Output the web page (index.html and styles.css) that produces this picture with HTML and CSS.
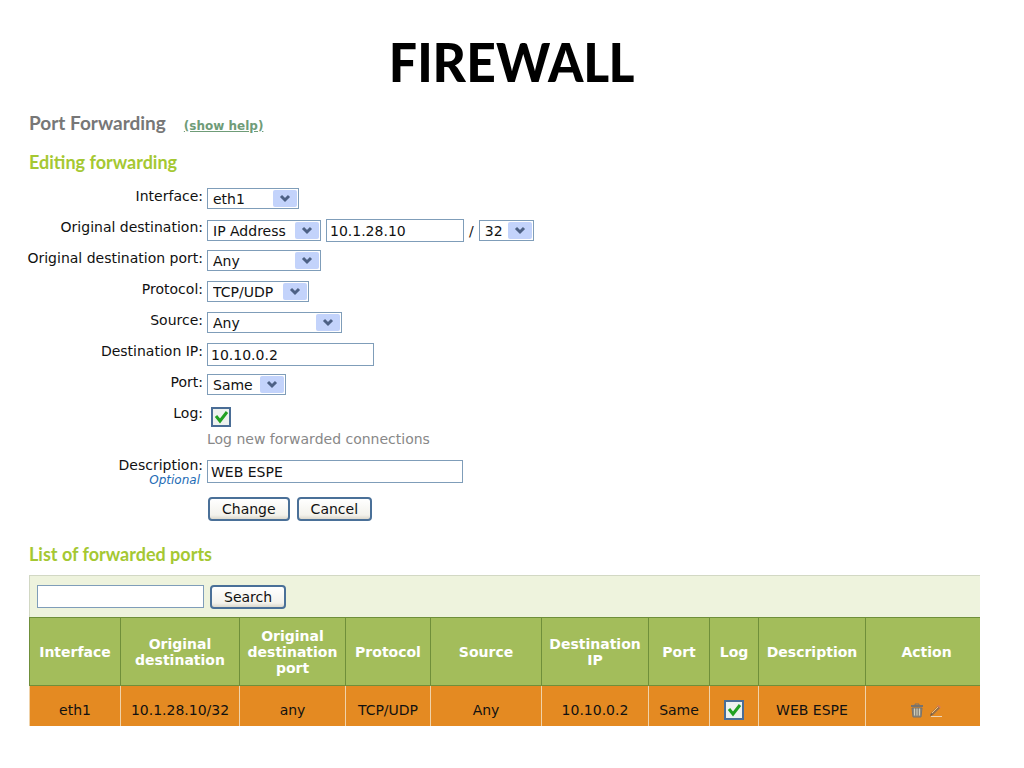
FILE: index.html
```html
<!DOCTYPE html>
<html lang="en">
<head>
  <meta charset="UTF-8">
  <meta name="viewport" content="width=device-width, initial-scale=1.0">
  <title>Firewall - Port Forwarding</title>
  <link rel="stylesheet" href="styles.css">
</head>
<body>

<h1>FIREWALL</h1>

<main>
  <header class="page-header">
    <h2>Port Forwarding</h2>
    <a class="help" href="#help">(show help)</a>
  </header>

  <h3>Editing forwarding</h3>

  <form class="edit-form">
    <div class="row">
      <label for="interface">Interface:</label>
      <div class="field">
        <select id="interface" class="w-interface"><option>eth1</option></select>
      </div>
    </div>
    <div class="row">
      <label for="orig-type">Original destination:</label>
      <div class="field">
        <select id="orig-type" class="w-type"><option>IP Address</option></select>
        <input type="text" class="w-address" value="10.1.28.10" aria-label="Original address">
        <span>/</span>
        <select class="w-mask" aria-label="Mask"><option>32</option></select>
      </div>
    </div>
    <div class="row">
      <label for="orig-port">Original destination port:</label>
      <div class="field">
        <select id="orig-port" class="w-type"><option>Any</option></select>
      </div>
    </div>
    <div class="row">
      <label for="protocol">Protocol:</label>
      <div class="field">
        <select id="protocol" class="w-protocol"><option>TCP/UDP</option></select>
      </div>
    </div>
    <div class="row">
      <label for="source">Source:</label>
      <div class="field">
        <select id="source" class="w-source"><option>Any</option></select>
      </div>
    </div>
    <div class="row">
      <label for="dest-ip">Destination IP:</label>
      <div class="field">
        <input type="text" id="dest-ip" class="w-text" value="10.10.0.2">
      </div>
    </div>
    <div class="row">
      <label for="port">Port:</label>
      <div class="field">
        <select id="port" class="w-port"><option>Same</option></select>
      </div>
    </div>
    <div class="row row-log">
      <label for="log">Log:</label>
      <div>
        <input type="checkbox" id="log" checked>
        <p class="hint">Log new forwarded connections</p>
      </div>
    </div>
    <div class="row row-description">
      <label for="description">Description:<em>Optional</em></label>
      <div class="field">
        <input type="text" id="description" class="w-description" value="WEB ESPE">
      </div>
    </div>
    <div class="buttons">
      <button type="button">Change</button>
      <button type="button">Cancel</button>
    </div>
  </form>

  <h3>List of forwarded ports</h3>

  <form class="search">
    <input type="text" class="w-text" aria-label="Search forwarded ports">
    <button type="button">Search</button>
  </form>

  <table>
    <colgroup>
      <col class="c-interface">
      <col class="c-destination">
      <col class="c-port-orig">
      <col class="c-protocol">
      <col class="c-source">
      <col class="c-ip">
      <col class="c-port">
      <col class="c-log">
      <col class="c-description">
      <col>
    </colgroup>
    <thead>
      <tr>
        <th>Interface</th>
        <th>Original destination</th>
        <th>Original destination port</th>
        <th>Protocol</th>
        <th>Source</th>
        <th>Destination IP</th>
        <th>Port</th>
        <th>Log</th>
        <th>Description</th>
        <th class="action">Action</th>
      </tr>
    </thead>
    <tbody>
      <tr>
        <td>eth1</td>
        <td>10.1.28.10/32</td>
        <td>any</td>
        <td>TCP/UDP</td>
        <td>Any</td>
        <td>10.10.0.2</td>
        <td>Same</td>
        <td><input type="checkbox" aria-label="Log" checked></td>
        <td>WEB ESPE</td>
        <td class="action">
          <a href="#delete" aria-label="Delete">
            <svg width="14" height="15" viewBox="0 0 14 15">
              <path d="M5 2V1h4v1" fill="none" stroke="#77736e"/>
              <path d="M1 2h12v2H1z" fill="#77736e"/>
              <path d="M2 5h10l-1 9H3z" fill="#8d8a80" stroke="#77736e"/>
              <path d="M4.500 5.500v7M7 5.500v7M9.500 5.500v7" stroke="#d2d0bd"/>
            </svg>
          </a>
          <a href="#edit" aria-label="Edit">
            <svg width="14" height="15" viewBox="0 0 14 15">
              <path d="M2 13.500h11" stroke="#ecd3b4"/>
              <path d="M3 11L10 4" stroke="#94704c" stroke-width="3"/>
              <path d="M3 10L9.500 3.500" stroke="#f3c07a"/>
              <path d="M9 2l3 2-1 1-3-2z" fill="#d77a5c"/>
              <path d="M1 13l1-3 2 2z" fill="#6d5a4a"/>
            </svg>
          </a>
        </td>
      </tr>
    </tbody>
  </table>
</main>

</body>
</html>
```

FILE: styles.css
```css
* {
  box-sizing: border-box;
  margin: 0;
  padding: 0;
}

body {
  font-family: Verdana, "DejaVu Sans", sans-serif;
  font-size: 14px;
  line-height: 16px;
  background: #fff;
  color: #111;
}

h1 {
  padding-top: 26px;
  font-family: Calibri, Lato, sans-serif;
  font-size: 60px;
  line-height: 72px;
  text-align: center;
  color: #000;
}

main {
  margin: 13px 44px 0 29px;
}

.page-header {
  display: flex;
  align-items: baseline;
  gap: 18px;
}

h2,
h3 {
  font-family: "Trebuchet MS", Lato, sans-serif;
  line-height: 24px;
}

h2 {
  font-size: 19px;
  color: #777;
}

h3 {
  font-size: 18px;
  color: #a5c832;
}

.help {
  font-size: 12px;
  font-weight: bold;
  color: #6f9c78;
}

.page-header + h3 {
  margin: 15px 0 14px;
}

/* Edit form */

.row {
  display: grid;
  grid-template-columns: 174px 1fr;
  column-gap: 4px;
  min-height: 31px;
}

.row label {
  justify-self: end;
  text-align: right;
  white-space: nowrap;
}

.row label em {
  display: block;
  padding-right: 3px;
  font-size: 12px;
  line-height: 14px;
  color: #1d6bb5;
}

.field {
  display: flex;
  align-items: center;
  align-self: start;
  gap: 5px;
}

select,
input[type="text"] {
  font: inherit;
  color: #111;
  border: 1px solid #7f9db9;
  border-radius: 0;
  background-color: #fff;
}

select {
  appearance: none;
  height: 21px;
  padding-left: 5px;
  background-image: url("data:image/svg+xml,%3Csvg xmlns='http://www.w3.org/2000/svg' width='24' height='17'%3E%3Crect width='24' height='17' rx='2' fill='%23c3d3fb'/%3E%3Cpath d='M8 6l4 4 4-4' fill='none' stroke='%234d6185' stroke-width='3'/%3E%3C/svg%3E");
  background-repeat: no-repeat;
  background-position: right 1px center;
}

input[type="text"] {
  height: 23px;
  padding: 0 3px;
}

input[type="checkbox"] {
  appearance: none;
  display: block;
  width: 20px;
  height: 20px;
  border: 2px solid #4a6d96;
  background: #eef2ee url("data:image/svg+xml,%3Csvg xmlns='http://www.w3.org/2000/svg' width='16' height='16'%3E%3Cpath d='M3 7l4 5 7-9' fill='none' stroke='%2321a121' stroke-width='3'/%3E%3C/svg%3E") center no-repeat;
}

.w-interface { width: 92px; }
.w-type { width: 114px; }
.w-address { width: 138px; }
.w-mask { width: 55px; }
.w-protocol { width: 102px; }
.w-source { width: 135px; }
.w-text { width: 167px; }
.w-port { width: 79px; }
.w-description { width: 256px; }

.row-log {
  min-height: 52px;
}

.row-log input {
  margin: 2px 4px;
}

.hint {
  margin-top: 4px;
  color: #888;
}

.row-description {
  min-height: 40px;
}

.row-description .field {
  padding-top: 3px;
}

.buttons {
  display: flex;
  gap: 7px;
  padding-left: 179px;
}

button {
  height: 24px;
  padding: 0 12px;
  font: inherit;
  color: #111;
  border: 2px solid #4a7098;
  border-radius: 4px;
  background: linear-gradient(#fff, #f3f2ec 80%, #dcd8cc);
}

/* Forwarded ports */

.edit-form + h3 {
  margin: 21px 0 9px;
}

.search {
  display: flex;
  align-items: center;
  gap: 6px;
  height: 42px;
  padding-left: 7px;
  border: solid #d2d8c4;
  border-width: 1px 0 0 1px;
  background: #eef3dd;
}

table {
  width: 100%;
  table-layout: fixed;
  border-collapse: separate;
  border-spacing: 0;
}

.c-interface { width: 91px; }
.c-destination { width: 119px; }
.c-port-orig { width: 106px; }
.c-protocol { width: 85px; }
.c-source { width: 111px; }
.c-ip { width: 107px; }
.c-port { width: 61px; }
.c-log { width: 49px; }
.c-description { width: 107px; }

th {
  height: 69px;
  font-size: 14px;
  color: #fff;
  background: #a3bd5b;
  border: solid #6f8f3a;
  border-width: 1px 0 1px 1px;
}

td {
  height: 40px;
  padding-top: 8px;
  text-align: center;
  background: #e48a22;
  border-left: 1px solid #f0d2a8;
}

td input[type="checkbox"] {
  margin: 0 auto;
}

.action {
  padding-left: 7px;
}

.action a {
  text-decoration: none;
}

.action svg {
  vertical-align: middle;
}
```
